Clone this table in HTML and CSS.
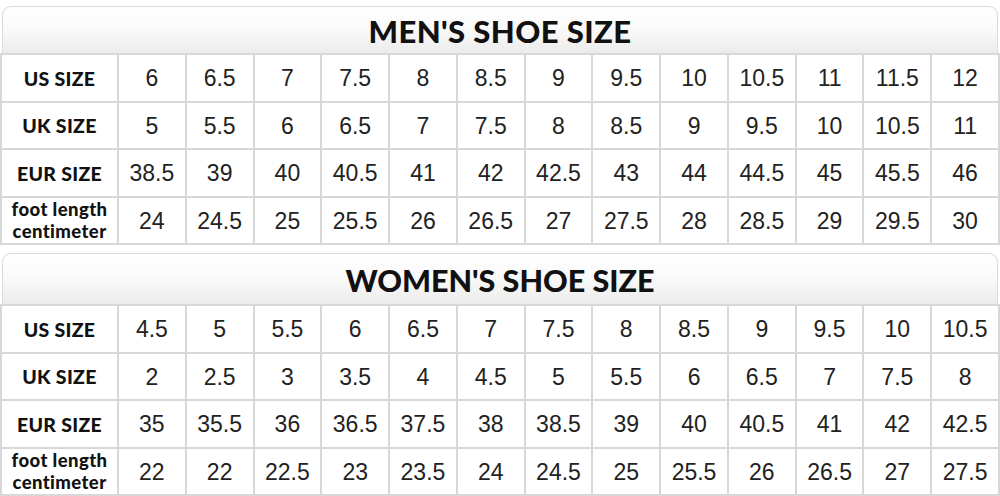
FILE: index.html
```html
<!DOCTYPE html>
<html>
<head>
<meta charset="utf-8">
<link rel="stylesheet" href="styles.css">
</head>
<body>
<div class="page">
  <section class="chart men">
    <div class="title">MEN'S SHOE SIZE</div>
    <div class="grid">
      <div class="label">US SIZE</div>
      <div>6</div><div>6.5</div><div>7</div><div>7.5</div><div>8</div><div>8.5</div><div>9</div><div>9.5</div><div>10</div><div>10.5</div><div>11</div><div>11.5</div><div>12</div>
      <div class="label">UK SIZE</div>
      <div>5</div><div>5.5</div><div>6</div><div>6.5</div><div>7</div><div>7.5</div><div>8</div><div>8.5</div><div>9</div><div>9.5</div><div>10</div><div>10.5</div><div>11</div>
      <div class="label">EUR SIZE</div>
      <div>38.5</div><div>39</div><div>40</div><div>40.5</div><div>41</div><div>42</div><div>42.5</div><div>43</div><div>44</div><div>44.5</div><div>45</div><div>45.5</div><div>46</div>
      <div class="label two"><span>foot length</span><span>centimeter</span></div>
      <div>24</div><div>24.5</div><div>25</div><div>25.5</div><div>26</div><div>26.5</div><div>27</div><div>27.5</div><div>28</div><div>28.5</div><div>29</div><div>29.5</div><div>30</div>
    </div>
  </section>
  <section class="chart women">
    <div class="title">WOMEN'S SHOE SIZE</div>
    <div class="grid">
      <div class="label">US SIZE</div>
      <div>4.5</div><div>5</div><div>5.5</div><div>6</div><div>6.5</div><div>7</div><div>7.5</div><div>8</div><div>8.5</div><div>9</div><div>9.5</div><div>10</div><div>10.5</div>
      <div class="label">UK SIZE</div>
      <div>2</div><div>2.5</div><div>3</div><div>3.5</div><div>4</div><div>4.5</div><div>5</div><div>5.5</div><div>6</div><div>6.5</div><div>7</div><div>7.5</div><div>8</div>
      <div class="label">EUR SIZE</div>
      <div>35</div><div>35.5</div><div>36</div><div>36.5</div><div>37.5</div><div>38</div><div>38.5</div><div>39</div><div>40</div><div>40.5</div><div>41</div><div>42</div><div>42.5</div>
      <div class="label two"><span>foot length</span><span>centimeter</span></div>
      <div>22</div><div>22</div><div>22.5</div><div>23</div><div>23.5</div><div>24</div><div>24.5</div><div>25</div><div>25.5</div><div>26</div><div>26.5</div><div>27</div><div>27.5</div>
    </div>
  </section>
</div>
</body>
</html>
```

FILE: styles.css
```css
html, body {
  margin: 0;
  padding: 0;
  background: #fff;
}
.page {
  width: 1000px;
  height: 496px;
  overflow: hidden;
  padding-top: 6px;
  box-sizing: border-box;
  display: flex;
  flex-direction: column;
  gap: 8px;
}
.chart {
  display: flex;
  flex-direction: column;
}
.title {
  margin: 0 2px 0 2px;
  height: 47px;
  border: 1px solid #d9d9d9;
  border-bottom: none;
  border-radius: 9px 9px 0 0;
  background: linear-gradient(#ffffff 0%, #fafafa 45%, #ececec 100%);
  display: flex;
  align-items: center;
  justify-content: center;
  font-family: Lato, "Open Sans", sans-serif;
  font-weight: 900;
  font-size: 31px;
  color: #111;
  letter-spacing: 0.4px;
  padding-top: 1px;
  box-sizing: border-box;
}
.women .title {
  height: 51px;
  letter-spacing: 0;
  font-size: 30.5px;
}
.grid {
  display: grid;
  grid-template-columns: 115px repeat(13, 1fr);
  grid-auto-rows: 45.5px;
  gap: 2px;
  background: #d8d8d8;
  padding: 2px 2px 2px 2px;
}
.grid > div {
  background: #fff;
  display: flex;
  align-items: center;
  justify-content: center;
  font-family: "Liberation Sans", Arial, sans-serif;
  font-size: 23px;
  color: #222;
  padding-top: 2px;
  box-sizing: border-box;
}
.grid > .label {
  font-family: Lato, "Open Sans", sans-serif;
  font-weight: 900;
  font-size: 19.5px;
  letter-spacing: 0.3px;
  color: #111;
  text-align: center;
  line-height: 22px;
}
.grid > .label.two {
  flex-direction: column;
  font-size: 18.5px;
  letter-spacing: 0.4px;
  line-height: 22px;
  padding-top: 0;
}
```
